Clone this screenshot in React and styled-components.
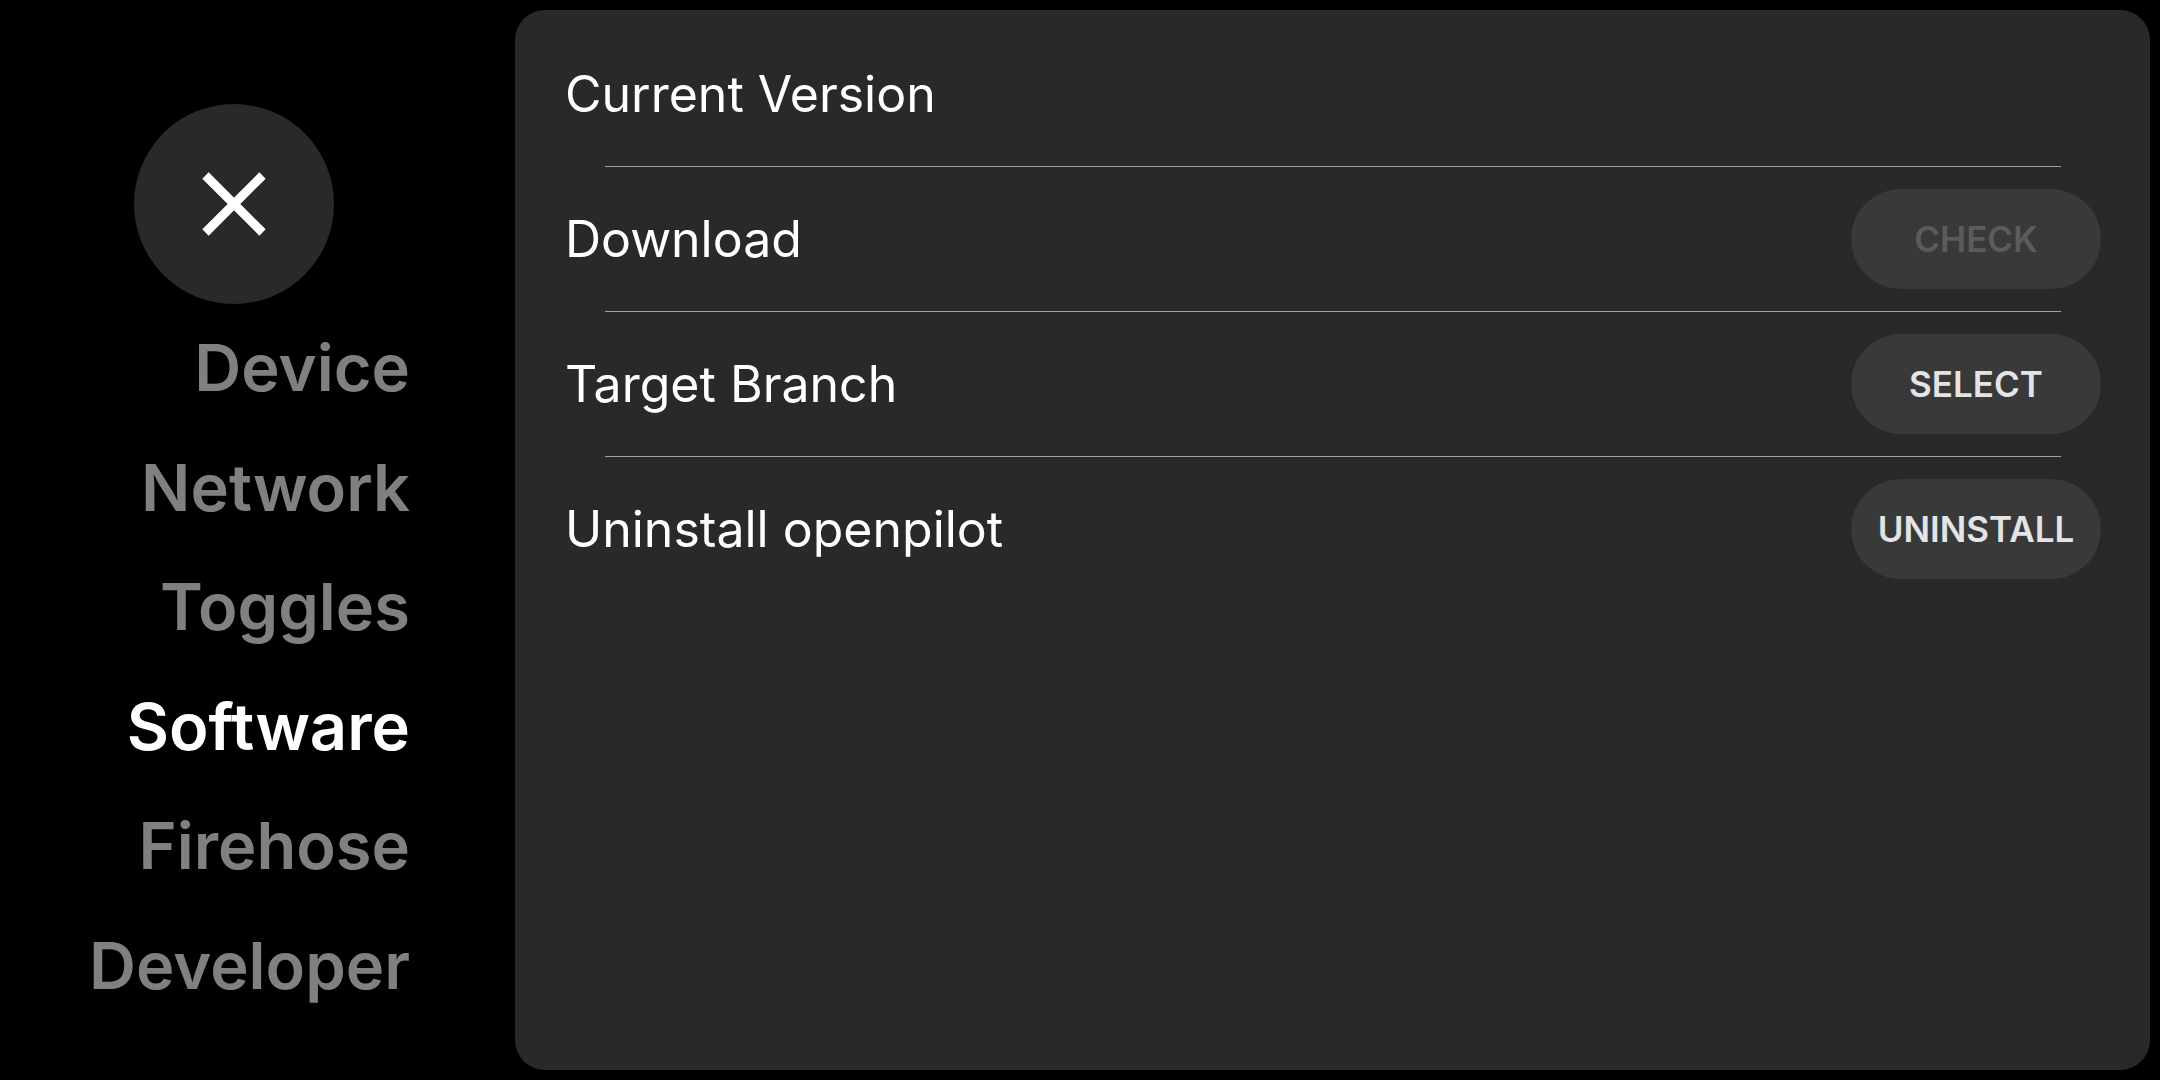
import React from 'react'
import styled, { createGlobalStyle } from 'styled-components'

const GlobalStyle = createGlobalStyle`
  html, body {
    margin: 0;
    padding: 0;
    background: #000;
  }
  body {
    font-family: Inter, "Noto Sans", sans-serif;
  }
`;

const Page = styled.div`
  display: flex;
  width: 2160px;
  height: 1080px;
  box-sizing: border-box;
  padding: 10px 10px 10px 0;
  background: #000;
`;

const Sidebar = styled.nav`
  display: flex;
  flex-direction: column;
  align-items: flex-end;
  width: 515px;
  flex-shrink: 0;
  box-sizing: border-box;
  padding: 94px 105px 0 0;
`;

const CloseButton = styled.button`
  display: flex;
  align-items: center;
  justify-content: center;
  align-self: flex-start;
  margin-left: 134px;
  width: 200px;
  height: 200px;
  border: none;
  border-radius: 50%;
  background: #292929;
  padding: 0;
  cursor: pointer;
`;

const NavList = styled.div`
  display: flex;
  flex-direction: column;
  align-items: flex-end;
  margin-top: 4px;
`;

const NavItem = styled.div`
  font-size: 65px;
  font-weight: 600;
  line-height: 119.5px;
  color: ${prop => prop.active ? '#ffffff' : '#808080'};
  white-space: nowrap;
`;

const Panel = styled.main`
  flex: 1;
  display: flex;
  flex-direction: column;
  background: #292929;
  border-radius: 30px;
  box-sizing: border-box;
  padding: 12px 49px 0 50px;
`;

const Row = styled.div`
  display: flex;
  align-items: center;
  justify-content: space-between;
  height: 144px;
`;

const Label = styled.div`
  font-size: 50px;
  font-weight: 400;
  color: #ffffff;
`;

const Divider = styled.div`
  height: 1px;
  margin: 0 40px;
  background: #a2a2a2;
`;

const PillButton = styled.button`
  width: 250px;
  height: 100px;
  border: none;
  border-radius: 50px;
  background: #393939;
  font-family: Inter, "Noto Sans", sans-serif;
  font-size: 35px;
  font-weight: 600;
  color: ${prop => prop.disabled ? '#5b5b5b' : '#e4e4e4'};
  text-transform: uppercase;
  padding: 0;
`;

const navItems = ['Device', 'Network', 'Toggles', 'Software', 'Firehose', 'Developer']

const rows = [
  { label: 'Current Version' },
  { label: 'Download', action: 'Check', disabled: true },
  { label: 'Target Branch', action: 'Select' },
  { label: 'Uninstall openpilot', action: 'Uninstall' },
]

function CloseIcon() {
  return (
    <svg width="64" height="64" viewBox="0 0 64 64">
      <path d="M3.5 3.5 L60.5 60.5 M60.5 3.5 L3.5 60.5" stroke="#fff" strokeWidth="9" strokeLinecap="butt" />
    </svg>
  )
}

export default function App() {
  return (
    <>
      <GlobalStyle />
      <Page>
        <Sidebar>
          <CloseButton aria-label="close">
            <CloseIcon />
          </CloseButton>
          <NavList>
            {navItems.map(item => (
              <NavItem key={item} active={item === 'Software'}>{item}</NavItem>
            ))}
          </NavList>
        </Sidebar>
        <Panel>
          {rows.map((row, i) => (
            <React.Fragment key={row.label}>
              {i > 0 && <Divider />}
              <Row>
                <Label>{row.label}</Label>
                {row.action && <PillButton disabled={row.disabled}>{row.action}</PillButton>}
              </Row>
            </React.Fragment>
          ))}
        </Panel>
      </Page>
    </>
  )
}
